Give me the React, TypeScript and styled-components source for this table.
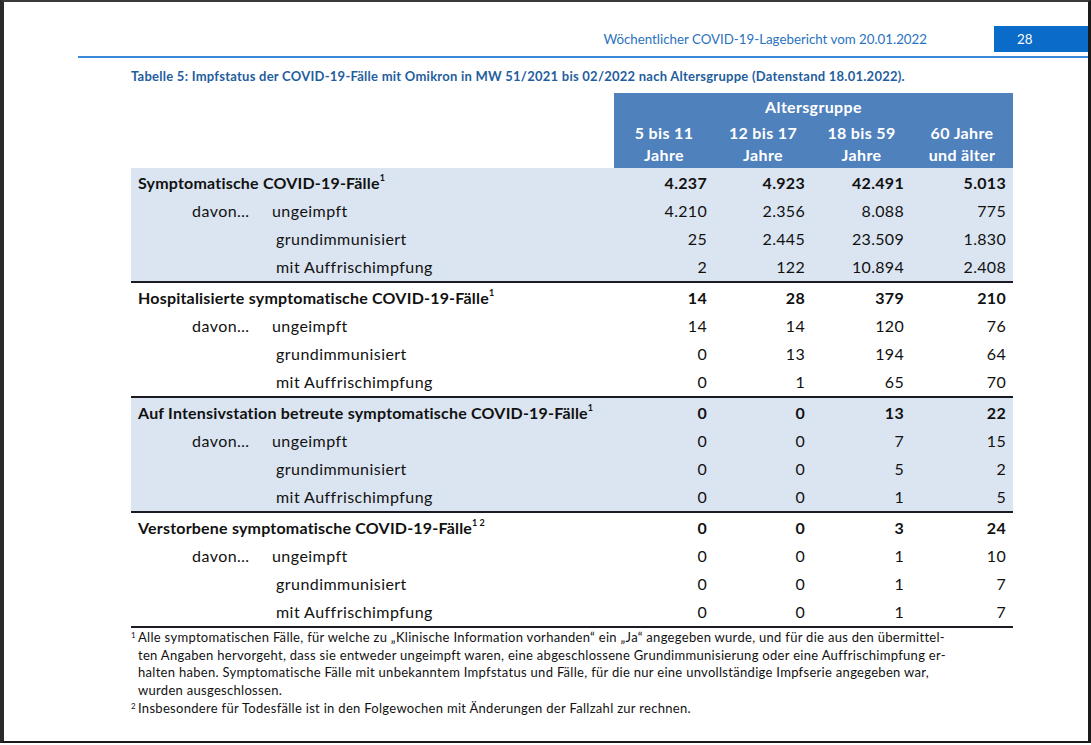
import React from "react";
import styled, { createGlobalStyle } from "styled-components";

const Global = createGlobalStyle`
  html, body { margin: 0; padding: 0; background: #fff; }
  body { font-family: Lato, "Open Sans", sans-serif; }
`;

const Frame = styled.div`
  box-sizing: border-box;
  width: 1091px;
  height: 743px;
  border-top: 2px solid #3a3a3a;
  border-left: 4px solid #2a2a2a;
  border-right: 3px solid #1a1a1a;
  border-bottom: 2px solid #1a1a1a;
  background: #fff;
  display: flex;
  flex-direction: column;
  overflow: hidden;
`;

const TopBar = styled.div`
  display: flex;
  align-items: center;
  justify-content: flex-end;
  margin-top: 24px;
  height: 26px;
  padding-left: 74px;
`;

const RunningTitle = styled.div`
  color: #2a72c0;
  font-size: 13.3px;
  margin-right: 67px;
`;

const PageNo = styled.div`
  box-sizing: border-box;
  width: 94px;
  height: 26px;
  background: #0a6bc8;
  color: #fff;
  font-size: 13.4px;
  display: flex;
  align-items: center;
  padding-left: 23px;
`;

const Rule = styled.div`
  margin-top: 4px;
  margin-left: 74px;
  height: 2px;
  background: #3b88d6;
`;

const Caption = styled.div`
  margin: 10px 0 0 127px;
  color: #1f5e9e;
  font-weight: 700;
  font-size: 13px;
  letter-spacing: 0.25px;
  height: 16px;
  line-height: 16px;
  white-space: nowrap;
`;

const Table = styled.div`
  margin: 9px 0 0 127px;
  width: 882px;
  display: flex;
  flex-direction: column;
`;

const COLS = "483px 100px 98px 99px 102px";

const HeadRow = styled.div`
  display: grid;
  grid-template-columns: ${COLS};
  height: 75px;
`;

const HeadBand = styled.div`
  grid-column: 2 / 6;
  background: #4f81bd;
  color: #fff;
  font-weight: 700;
  font-size: 16px;
  letter-spacing: 0.35px;
  display: grid;
  grid-template-columns: 100px 98px 99px 102px;
  grid-template-rows: 28px 47px;
`;

const GroupTitle = styled.div`
  grid-column: 1 / 5;
  text-align: center;
  line-height: 28px;
`;

const ColHead = styled.div`
  text-align: center;
  line-height: 22px;
  padding-top: 1px;
  white-space: nowrap;
`;

const Section = styled.div<{ $shade?: boolean }>`
  background: ${(p) => (p.$shade ? "#dbe5f1" : "#fff")};
  border-bottom: 2px solid #1b1b24;
`;

const Row = styled.div`
  display: grid;
  grid-template-columns: ${COLS};
  height: 28.25px;
  align-items: center;
  font-size: 16px;
  color: #111;
`;

const Label = styled.div<{ $bold?: boolean }>`
  display: flex;
  font-weight: ${(p) => (p.$bold ? 700 : 400)};
  letter-spacing: ${(p) => (p.$bold ? "0.2px" : "0.45px")};
  padding-left: 7px;
  white-space: nowrap;
`;

const Davon = styled.span<{ $hidden?: boolean }>`
  display: inline-block;
  width: 80px;
  padding-left: 54px;
  visibility: ${(p) => (p.$hidden ? "hidden" : "visible")};
`;

const Sub = styled.span<{ $shift: number }>`
  padding-left: ${(p) => p.$shift}px;
`;

const Num = styled.div<{ $bold?: boolean }>`
  text-align: right;
  padding-right: 7px;
  letter-spacing: 0.3px;
  font-weight: ${(p) => (p.$bold ? 700 : 400)};
`;

const Sup = styled.sup`
  font-size: 9px;
  vertical-align: top;
  position: relative;
  top: -1px;
  letter-spacing: 0;
`;

const Notes = styled.div`
  margin: 1px 0 0 127px;
  width: 880px;
  font-size: 13px;
  letter-spacing: 0.3px;
  line-height: 17.7px;
  color: #111;
`;

const Note = styled.div`
  display: flex;
  white-space: nowrap;
`;

const NoteMark = styled.span`
  width: 7px;
  font-size: 8px;
  line-height: 12px;
  flex: none;
  letter-spacing: 0;
`;

type SectionData = {
  title: React.ReactNode;
  totals: string[];
  sub: string[][];
  shade: boolean;
};

const data: SectionData[] = [
  {
    title: (
      <>
        Symptomatische COVID-19-Fälle<Sup>1</Sup>
      </>
    ),
    totals: ["4.237", "4.923", "42.491", "5.013"],
    sub: [
      ["4.210", "2.356", "8.088", "775"],
      ["25", "2.445", "23.509", "1.830"],
      ["2", "122", "10.894", "2.408"],
    ],
    shade: true,
  },
  {
    title: (
      <>
        Hospitalisierte symptomatische COVID-19-Fälle<Sup>1</Sup>
      </>
    ),
    totals: ["14", "28", "379", "210"],
    sub: [
      ["14", "14", "120", "76"],
      ["0", "13", "194", "64"],
      ["0", "1", "65", "70"],
    ],
    shade: false,
  },
  {
    title: (
      <>
        Auf Intensivstation betreute symptomatische COVID-19-Fälle<Sup>1</Sup>
      </>
    ),
    totals: ["0", "0", "13", "22"],
    sub: [
      ["0", "0", "7", "15"],
      ["0", "0", "5", "2"],
      ["0", "0", "1", "5"],
    ],
    shade: true,
  },
  {
    title: (
      <>
        Verstorbene symptomatische COVID-19-Fälle<Sup>1 2</Sup>
      </>
    ),
    totals: ["0", "0", "3", "24"],
    sub: [
      ["0", "0", "1", "10"],
      ["0", "0", "1", "7"],
      ["0", "0", "1", "7"],
    ],
    shade: false,
  },
];

const subLabels: [string, number][] = [
  ["ungeimpft", 0],
  ["grundimmunisiert", 4],
  ["mit Auffrischimpfung", 4],
];

export default function App() {
  return (
    <>
      <Global />
      <Frame>
        <TopBar>
          <RunningTitle>Wöchentlicher COVID-19-Lagebericht vom 20.01.2022</RunningTitle>
          <PageNo>28</PageNo>
        </TopBar>
        <Rule />
        <Caption>
          Tabelle 5: Impfstatus der COVID-19-Fälle mit Omikron in MW 51/2021 bis 02/2022 nach Altersgruppe
          (Datenstand 18.01.2022).
        </Caption>
        <Table>
          <HeadRow>
            <div />
            <HeadBand>
              <GroupTitle>Altersgruppe</GroupTitle>
              <ColHead>
                5 bis 11
                <br />
                Jahre
              </ColHead>
              <ColHead>
                12 bis 17
                <br />
                Jahre
              </ColHead>
              <ColHead>
                18 bis 59
                <br />
                Jahre
              </ColHead>
              <ColHead>
                60 Jahre
                <br />
                und älter
              </ColHead>
            </HeadBand>
          </HeadRow>
          {data.map((s, i) => (
            <Section key={i} $shade={s.shade}>
              <Row>
                <Label $bold>{s.title}</Label>
                {s.totals.map((t, j) => (
                  <Num key={j} $bold>
                    {t}
                  </Num>
                ))}
              </Row>
              {s.sub.map((vals, k) => (
                <Row key={k}>
                  <Label>
                    <Davon $hidden={k > 0}>davon…</Davon>
                    <Sub $shift={subLabels[k][1]}>{subLabels[k][0]}</Sub>
                  </Label>
                  {vals.map((v, j) => (
                    <Num key={j}>{v}</Num>
                  ))}
                </Row>
              ))}
            </Section>
          ))}
        </Table>
        <Notes>
          <Note>
            <NoteMark>1</NoteMark>
            <span>
              Alle symptomatischen Fälle, für welche zu „Klinische Information vorhanden“ ein „Ja“ angegeben wurde,
              und für die aus den übermittel-
              <br />
              ten Angaben hervorgeht, dass sie entweder ungeimpft waren, eine abgeschlossene Grundimmunisierung oder
              eine Auffrischimpfung er-
              <br />
              halten haben. Symptomatische Fälle mit unbekanntem Impfstatus und Fälle, für die nur eine unvollständige
              Impfserie angegeben war,
              <br />
              wurden ausgeschlossen.
            </span>
          </Note>
          <Note>
            <NoteMark>2</NoteMark>
            <span>Insbesondere für Todesfälle ist in den Folgewochen mit Änderungen der Fallzahl zur rechnen.</span>
          </Note>
        </Notes>
      </Frame>
    </>
  );
}
